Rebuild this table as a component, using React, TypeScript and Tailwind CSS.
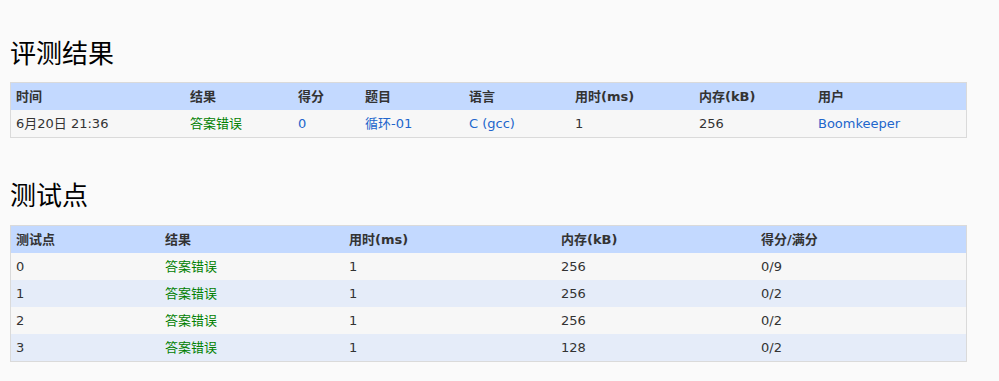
import React from "react";

const font = { fontFamily: '"DejaVu Sans", "Noto Sans CJK SC", sans-serif' };

type Cell = { text: string; kind?: "link" | "ok" };

function Table({ widths, headers, rows }: { widths: number[]; headers: string[]; rows: Cell[][] }) {
  return (
    <div className="border border-[#dadada] w-[957px]">
      <div className="flex h-[27px] items-center bg-[#c3d9ff]">
        {headers.map((h, i) => (
          <div key={i} style={{ width: widths[i] }} className="px-[5px] font-bold text-[#333] text-[13px] shrink-0">
            {h}
          </div>
        ))}
      </div>
      {rows.map((r, ri) => (
        <div key={ri} className={"flex h-[27px] items-center " + (ri % 2 === 0 ? "bg-[#f7f7f7]" : "bg-[#e5ecf9]")}>
          {r.map((c, i) => (
            <div
              key={i}
              style={{ width: widths[i] }}
              className={
                "px-[5px] text-[13px] shrink-0 " +
                (c.kind === "link" ? "text-[#2266cc]" : c.kind === "ok" ? "text-[#008000]" : "text-[#333]")
              }
            >
              {c.text}
            </div>
          ))}
        </div>
      ))}
    </div>
  );
}

export default function App() {
  const w1 = [174, 108, 67, 104, 106, 124, 119, 155];
  const w2 = [149, 184, 212, 200, 212];
  const ok = "答案错误";
  return (
    <div className="min-h-[381px] bg-[#fafafa] pt-[34px] px-[10px]" style={font}>
      <h2 className="h-[36px] leading-[36px] text-[26px] text-black font-normal" style={{ fontFamily: '"Noto Sans CJK SC", sans-serif' }}>
        评测结果
      </h2>
      <div className="mt-[12px]">
        <Table
          widths={w1}
          headers={["时间", "结果", "得分", "题目", "语言", "用时(ms)", "内存(kB)", "用户"]}
          rows={[
            [
              { text: "6月20日 21:36" },
              { text: ok, kind: "ok" },
              { text: "0", kind: "link" },
              { text: "循环-01", kind: "link" },
              { text: "C (gcc)", kind: "link" },
              { text: "1" },
              { text: "256" },
              { text: "Boomkeeper", kind: "link" },
            ],
          ]}
        />
      </div>
      <h2 className="mt-[38px] h-[36px] leading-[36px] text-[26px] text-black font-normal" style={{ fontFamily: '"Noto Sans CJK SC", sans-serif' }}>
        测试点
      </h2>
      <div className="mt-[13px]">
        <Table
          widths={w2}
          headers={["测试点", "结果", "用时(ms)", "内存(kB)", "得分/满分"]}
          rows={[
            [{ text: "0" }, { text: ok, kind: "ok" }, { text: "1" }, { text: "256" }, { text: "0/9" }],
            [{ text: "1" }, { text: ok, kind: "ok" }, { text: "1" }, { text: "256" }, { text: "0/2" }],
            [{ text: "2" }, { text: ok, kind: "ok" }, { text: "1" }, { text: "256" }, { text: "0/2" }],
            [{ text: "3" }, { text: ok, kind: "ok" }, { text: "1" }, { text: "128" }, { text: "0/2" }],
          ]}
        />
      </div>
    </div>
  );
}
